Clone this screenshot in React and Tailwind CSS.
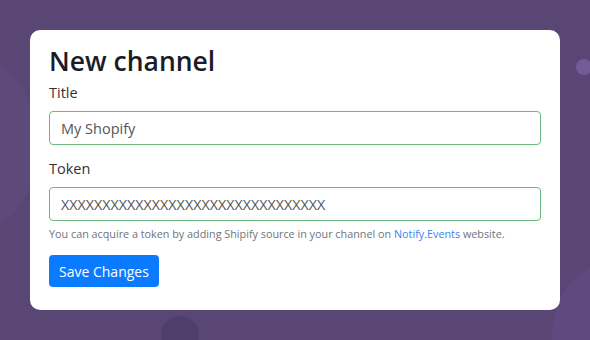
import React from "react";

export default function App() {
    return (
        <div
            className="relative w-[590px] h-[340px] overflow-hidden bg-[#594674] px-[30px] pt-[30px]"
            style={{ fontFamily: '"Open Sans", "Noto Sans", sans-serif' }}
        >
            {/* background blobs */}
            <div className="absolute -left-[160px] top-[45px] w-[200px] h-[200px] rounded-full bg-[#5d497a]" />
            <div className="absolute left-[576px] top-[59px] w-[16px] h-[16px] rounded-full bg-[#715c97]" />
            <div className="absolute left-[552px] top-[258px] w-[150px] h-[150px] rounded-full bg-[#5f4a7f]" />
            <div className="absolute left-[161px] top-[316px] w-[38px] h-[38px] rounded-full bg-[#4f3d6b]" />

            <div className="relative flex h-[280px] flex-col items-start rounded-[10px] bg-white px-[19px] pt-[13px]">
                <h1 className="text-[26.5px] font-semibold leading-[36px] text-[#1c1c28]">New channel</h1>
                <label className="mt-[4px] text-[14.5px] leading-[20px] text-[#333]">Title</label>
                <input
                    type="text"
                    defaultValue="My Shopify"
                    className="mt-[8px] w-[492px] h-[34px] rounded-[4px] border border-[#6cb97d] px-[11px] text-[14.5px] text-[#555] outline-none"
                />
                <label className="mt-[14px] text-[14.5px] leading-[20px] text-[#333]">Token</label>
                <input
                    type="text"
                    defaultValue="XXXXXXXXXXXXXXXXXXXXXXXXXXXXXXXX"
                    className="mt-[8px] w-[492px] h-[34px] rounded-[4px] border border-[#6cb97d] px-[11px] text-[14.3px] text-[#555] outline-none"
                />
                <p className="mt-[5px] text-[10.8px] leading-[16px] text-[#6c757d]">
                    You can acquire a token by adding Shipify source in your channel on{" "}
                    <a href="#" className="text-[#3b82f6]">Notify.Events</a> website.
                </p>
                <button
                    type="button"
                    className="mt-[13px] h-[32px] rounded-[4px] bg-[#0a7bff] px-[10px] text-[14px] text-white"
                >
                    Save Changes
                </button>
            </div>
        </div>
    );
}
